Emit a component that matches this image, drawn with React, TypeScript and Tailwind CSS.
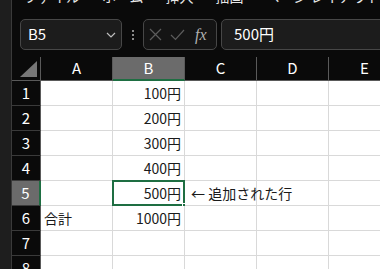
import React from 'react';

const font = { fontFamily: '"Noto Sans CJK JP", "Noto Sans", sans-serif' };

const cols = ['A', 'B', 'C', 'D', 'E'];

const rows: { n: number; a?: string; b?: string; note?: string }[] = [
  { n: 1, b: '100円' },
  { n: 2, b: '200円' },
  { n: 3, b: '300円' },
  { n: 4, b: '400円' },
  { n: 5, b: '500円', note: '← 追加された行' },
  { n: 6, a: '合計', b: '1000円' },
  { n: 7 },
  { n: 8 },
];

function Chevron() {
  return (
    <svg width="10" height="6" viewBox="0 0 10 6" fill="none">
      <path d="M1 1l4 4 4-4" stroke="#bdbdbd" strokeWidth="1.2" />
    </svg>
  );
}

export default function App() {
  return (
    <div className="w-[380px] h-[269px] overflow-hidden bg-[#0a0a0a] flex text-white" style={font}>
      {/* left window edge */}
      <div className="w-[12px] shrink-0 bg-[#1e1e1e] border-r border-[#3a3a3a]" />

      <div className="flex-1 flex flex-col min-w-0">
        {/* ribbon tabs, cut off at the top */}
        <div className="h-[19px] overflow-hidden shrink-0">
          <div className="-mt-[14px] pl-[12px] flex gap-[22px] text-[14px] whitespace-nowrap text-[#e6e6e6]">
            <span>ファイル</span>
            <span>ホーム</span>
            <span>挿入</span>
            <span>描画</span>
            <span>ページ レイアウト</span>
            <span>数式</span>
            <span>データ</span>
          </div>
        </div>

        {/* formula bar */}
        <div className="h-[31px] shrink-0 flex items-stretch">
          <div className="ml-[8px] w-[102px] rounded-[5px] border border-[#474747] bg-[#1c1c1c] flex items-center justify-between pl-[7px] pr-[5px]">
            <span className="text-[15px] text-white">B5</span>
            <Chevron />
          </div>
          <div className="w-[21px] flex flex-col items-center justify-center gap-[2px]">
            <span className="w-[2px] h-[2px] bg-[#8a8a8a]" />
            <span className="w-[2px] h-[2px] bg-[#8a8a8a]" />
            <span className="w-[2px] h-[2px] bg-[#8a8a8a]" />
          </div>
          <div className="w-[74px] rounded-[5px] border border-[#474747] bg-[#141414] flex items-center pl-[5px] gap-[8px]">
            <svg width="13" height="13" viewBox="0 0 13 13" fill="none">
              <path d="M1 1l11 11M12 1L1 12" stroke="#5c5c5c" strokeWidth="1.2" />
            </svg>
            <svg width="15" height="12" viewBox="0 0 15 12" fill="none">
              <path d="M1 6l4.5 4.5L14 1" stroke="#5c5c5c" strokeWidth="1.2" />
            </svg>
            <span className="text-[16px] italic text-[#b0b0b0] ml-[2px]" style={{ fontFamily: '"Liberation Serif", serif' }}>
              fx
            </span>
          </div>
          <div className="ml-[4px] flex-1 -mr-[4px] rounded-l-[5px] border border-[#474747] bg-[#1c1c1c] flex items-center pl-[12px]">
            <span className="text-[15px] text-white">500円</span>
          </div>
        </div>

        <div className="h-[7px] shrink-0" />

        {/* sheet */}
        <div className="flex flex-col">
          <div className="flex h-[24px] shrink-0">
            <div className="w-[29px] shrink-0 border-r border-b border-[#5a5a5a] flex items-end justify-end pr-[3px] pb-[3px]">
              <svg width="17" height="16" viewBox="0 0 17 16">
                <path d="M0 16H17V0Z" fill="#777" />
              </svg>
            </div>
            {cols.map((c) => (
              <div
                key={c}
                className={
                  c === 'B'
                    ? 'w-[72px] shrink-0 bg-[#6b6b6b] border-r border-[#5a5a5a] border-b-2 border-b-[#1e6e42] flex items-center justify-center text-[15px]'
                    : 'w-[72px] shrink-0 border-r border-b border-[#5a5a5a] flex items-center justify-center text-[15px]'
                }
              >
                {c}
              </div>
            ))}
          </div>

          {rows.map((r) => (
            <div key={r.n} className="flex h-[25px] shrink-0">
              <div
                className={
                  r.n === 5
                    ? 'w-[29px] shrink-0 bg-[#6b6b6b] border-b border-[#3a3a3a] border-r-2 border-r-[#1e6e42] flex items-center justify-center text-[15px]'
                    : 'w-[29px] shrink-0 border-b border-[#3a3a3a] border-r border-r-[#5a5a5a] flex items-center justify-center text-[15px]'
                }
              >
                {r.n}
              </div>
              <div className="w-[72px] shrink-0 bg-white border-r border-b border-[#d9d9d9] flex items-center pl-[3px] text-[14px] text-[#1a1a1a]">
                {r.a}
              </div>
              <div className="relative w-[72px] shrink-0 bg-white border-r border-b border-[#d9d9d9] flex items-center justify-end pr-[3px] text-[14px] text-[#1a1a1a]">
                {r.b}
                {r.n === 5 && (
                  <>
                    <div className="absolute -left-[1px] -top-[1px] -right-[1px] -bottom-[1px] border-2 border-[#1e6e42]" />
                    <div className="absolute -right-[4px] -bottom-[4px] w-[6px] h-[6px] bg-[#1e6e42] border border-white" />
                  </>
                )}
              </div>
              <div className="relative w-[72px] shrink-0 bg-white border-r border-b border-[#d9d9d9]">
                {r.note && (
                  <span className="absolute left-[6px] top-0 h-full flex items-center whitespace-nowrap text-[14px] text-[#1a1a1a] z-10">
                    {r.note}
                  </span>
                )}
              </div>
              <div className="w-[72px] shrink-0 bg-white border-r border-b border-[#d9d9d9]" />
              <div className="w-[72px] shrink-0 bg-white border-r border-b border-[#d9d9d9]" />
            </div>
          ))}
        </div>
      </div>
    </div>
  );
}
